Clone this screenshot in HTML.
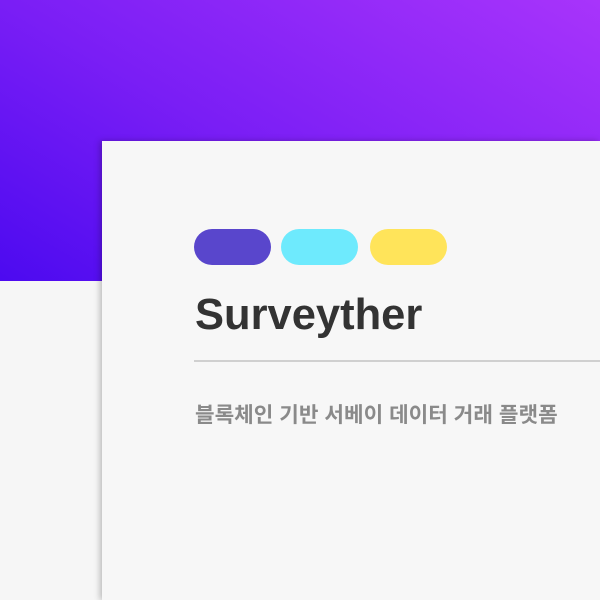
<!DOCTYPE html>
<html><head><meta charset="utf-8"><style>
html,body{margin:0;padding:0;width:600px;height:600px;overflow:hidden;background:#f6f6f6}
.bg{position:absolute;left:0;top:0;width:600px;height:281px;background:linear-gradient(30deg,#4c0af0 0%,#7a1ef5 45%,#a834fb 100%)}
.card{position:absolute;left:102px;top:141px;width:498px;height:459px;background:#f7f7f7;box-shadow:-2px 0 6px rgba(0,0,0,.25)}
.pill{position:absolute;top:229px;width:77px;height:36px;border-radius:18px}
h1{position:absolute;left:195px;top:289px;margin:0;font:bold 43.5px/52px "Liberation Sans",sans-serif;color:#333}
.line{position:absolute;left:194px;top:360px;width:406px;height:2px;background:#d0d0d0}
.sub{position:absolute;left:195px;top:401px;font:bold 21.3px/28px "Liberation Sans","Noto Sans CJK KR",sans-serif;color:#8a8a8a;white-space:nowrap}
</style></head><body>
<div class="bg"></div>
<div class="card"></div>
<div class="pill" style="left:194px;background:#5946cc"></div>
<div class="pill" style="left:281px;background:#6eeafd"></div>
<div class="pill" style="left:370px;background:#ffe45a"></div>
<h1>Surveyther</h1>
<div class="line"></div>
<div class="sub">블록체인 기반 서베이 데이터 거래 플랫폼</div>
</body></html>
